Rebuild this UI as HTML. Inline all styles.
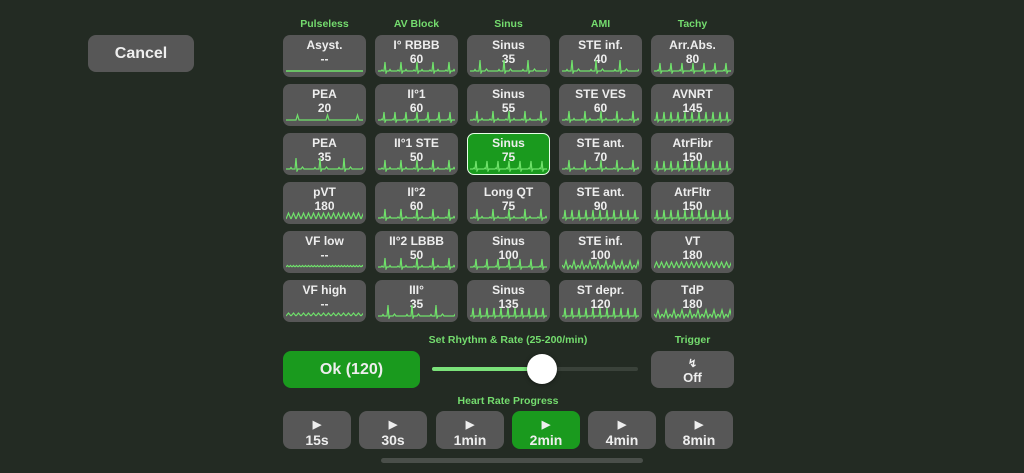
<!DOCTYPE html>
<html><head><meta charset="utf-8"><style>
body{margin:0;width:1024px;height:473px;background:#232b23;font-family:"Liberation Sans",sans-serif;position:relative;overflow:hidden}
.a{position:absolute}
.h{position:absolute;top:18px;width:83px;text-align:center;color:#74dc6e;font-size:10.5px;font-weight:bold}
.c{position:absolute;width:83px;height:42px;background:#575757;border-radius:7px;color:#eee;text-align:center;font-weight:bold;font-size:12px;line-height:14px;box-sizing:border-box;padding-top:3px;overflow:hidden}
.c.g{background:#1a9a1e;border:1.5px solid #e8ffe8;padding-top:2px}
.c svg{position:absolute;left:3px;top:21px}
.c.g svg{left:1.5px;top:19.5px}
.b{position:absolute;background:#575757;border-radius:8px;color:#eee;text-align:center;font-weight:bold}
.p{top:411px;width:68px;height:38px;font-size:14px;line-height:15px;padding-top:5px;box-sizing:border-box}
.p i{font-style:normal;font-size:11px}
</style></head><body>
<svg width="0" height="0" style="position:absolute"><defs>
<pattern id="s40" width="40" height="18" patternUnits="userSpaceOnUse"><path d="M0 15H8L9.5 13L11 15H16L17 4L18.5 17L19.5 15H24L26 12L28 15H40" fill="none" stroke="#6fe26a" stroke-width="1.2"/></pattern>
<pattern id="s24" width="24" height="18" patternUnits="userSpaceOnUse"><path d="M0 15H4L5 13.5L6 15H9L10 4L11 17L12 15H15L16.5 13L18 15H24" fill="none" stroke="#6fe26a" stroke-width="1.2"/></pattern>
<pattern id="s16" width="16" height="18" patternUnits="userSpaceOnUse"><path d="M0 15H3L4 14L5 15H6L7 6L8 17L9 15H11L12 13.5L13 15H16" fill="none" stroke="#6fe26a" stroke-width="1.2"/></pattern>
<pattern id="s11" width="11" height="18" patternUnits="userSpaceOnUse"><path d="M0 15H3L4 14L5 15L6 7L7 17L8 15H11" fill="none" stroke="#6fe26a" stroke-width="1.2"/></pattern>
<pattern id="s7" width="7" height="18" patternUnits="userSpaceOnUse"><path d="M0 15H2L3 7L4 16.5L5 15H7" fill="none" stroke="#6fe26a" stroke-width="1.2"/></pattern>
<pattern id="s30" width="30" height="18" patternUnits="userSpaceOnUse"><path d="M0 15H10L11.5 10L13 15H30" fill="none" stroke="#6fe26a" stroke-width="1.2"/></pattern>
<pattern id="z5" width="5" height="18" patternUnits="userSpaceOnUse"><path d="M0 15L2.5 12L5 15" fill="none" stroke="#6fe26a" stroke-width="1.2"/></pattern>
<pattern id="z3" width="3" height="18" patternUnits="userSpaceOnUse"><path d="M0 15L1.5 13.5L3 15" fill="none" stroke="#6fe26a" stroke-width="1.2"/></pattern>
<pattern id="v5" width="5" height="18" patternUnits="userSpaceOnUse"><path d="M0 16L2.5 10L5 16" fill="none" stroke="#6fe26a" stroke-width="1.2"/></pattern>
<pattern id="t8" width="8" height="18" patternUnits="userSpaceOnUse"><path d="M0 13L2 16L4 9L6 17L8 13" fill="none" stroke="#6fe26a" stroke-width="1.2"/></pattern>
<pattern id="f" width="10" height="18" patternUnits="userSpaceOnUse"><path d="M0 15H10" fill="none" stroke="#6fe26a" stroke-width="1.5"/></pattern>
</defs></svg>

<div class="b" style="left:88px;top:35px;width:106px;height:37px;font-size:16px;line-height:37px">Cancel</div>

<div class="h" style="left:283px">Pulseless</div>
<div class="h" style="left:375px">AV Block</div>
<div class="h" style="left:467px">Sinus</div>
<div class="h" style="left:559px">AMI</div>
<div class="h" style="left:651px">Tachy</div>

<div class="c" style="left:283px;top:35px">Asyst.<br>--<svg width="77" height="18"><rect width="77" height="18" fill="url(#f)"/></svg></div>
<div class="c" style="left:283px;top:84px">PEA<br>20<svg width="77" height="18"><rect width="77" height="18" fill="url(#s30)"/></svg></div>
<div class="c" style="left:283px;top:133px">PEA<br>35<svg width="77" height="18"><rect width="77" height="18" fill="url(#s24)"/></svg></div>
<div class="c" style="left:283px;top:182px">pVT<br>180<svg width="77" height="18"><rect width="77" height="18" fill="url(#v5)"/></svg></div>
<div class="c" style="left:283px;top:231px">VF low<br>--<svg width="77" height="18"><rect width="77" height="18" fill="url(#z3)"/></svg></div>
<div class="c" style="left:283px;top:280px">VF high<br>--<svg width="77" height="18"><rect width="77" height="18" fill="url(#z5)"/></svg></div>

<div class="c" style="left:375px;top:35px">I° RBBB<br>60<svg width="77" height="18"><rect width="77" height="18" fill="url(#s16)"/></svg></div>
<div class="c" style="left:375px;top:84px">II°1<br>60<svg width="77" height="18"><rect width="77" height="18" fill="url(#s11)"/></svg></div>
<div class="c" style="left:375px;top:133px">II°1 STE<br>50<svg width="77" height="18"><rect width="77" height="18" fill="url(#s16)"/></svg></div>
<div class="c" style="left:375px;top:182px">II°2<br>60<svg width="77" height="18"><rect width="77" height="18" fill="url(#s16)"/></svg></div>
<div class="c" style="left:375px;top:231px">II°2 LBBB<br>50<svg width="77" height="18"><rect width="77" height="18" fill="url(#s16)"/></svg></div>
<div class="c" style="left:375px;top:280px">III°<br>35<svg width="77" height="18"><rect width="77" height="18" fill="url(#s24)"/></svg></div>

<div class="c" style="left:467px;top:35px">Sinus<br>35<svg width="77" height="18"><rect width="77" height="18" fill="url(#s24)"/></svg></div>
<div class="c" style="left:467px;top:84px">Sinus<br>55<svg width="77" height="18"><rect width="77" height="18" fill="url(#s16)"/></svg></div>
<div class="c g" style="left:467px;top:133px">Sinus<br>75<svg width="77" height="18"><rect width="77" height="18" fill="url(#s11)"/></svg></div>
<div class="c" style="left:467px;top:182px">Long QT<br>75<svg width="77" height="18"><rect width="77" height="18" fill="url(#s16)"/></svg></div>
<div class="c" style="left:467px;top:231px">Sinus<br>100<svg width="77" height="18"><rect width="77" height="18" fill="url(#s11)"/></svg></div>
<div class="c" style="left:467px;top:280px">Sinus<br>135<svg width="77" height="18"><rect width="77" height="18" fill="url(#s7)"/></svg></div>

<div class="c" style="left:559px;top:35px">STE inf.<br>40<svg width="77" height="18"><rect width="77" height="18" fill="url(#s24)"/></svg></div>
<div class="c" style="left:559px;top:84px">STE VES<br>60<svg width="77" height="18"><rect width="77" height="18" fill="url(#s16)"/></svg></div>
<div class="c" style="left:559px;top:133px">STE ant.<br>70<svg width="77" height="18"><rect width="77" height="18" fill="url(#s16)"/></svg></div>
<div class="c" style="left:559px;top:182px">STE ant.<br>90<svg width="77" height="18"><rect width="77" height="18" fill="url(#s7)"/></svg></div>
<div class="c" style="left:559px;top:231px">STE inf.<br>100<svg width="77" height="18"><rect width="77" height="18" fill="url(#t8)"/></svg></div>
<div class="c" style="left:559px;top:280px">ST depr.<br>120<svg width="77" height="18"><rect width="77" height="18" fill="url(#s7)"/></svg></div>

<div class="c" style="left:651px;top:35px">Arr.Abs.<br>80<svg width="77" height="18"><rect width="77" height="18" fill="url(#s11)"/></svg></div>
<div class="c" style="left:651px;top:84px">AVNRT<br>145<svg width="77" height="18"><rect width="77" height="18" fill="url(#s7)"/></svg></div>
<div class="c" style="left:651px;top:133px">AtrFibr<br>150<svg width="77" height="18"><rect width="77" height="18" fill="url(#s7)"/></svg></div>
<div class="c" style="left:651px;top:182px">AtrFltr<br>150<svg width="77" height="18"><rect width="77" height="18" fill="url(#s7)"/></svg></div>
<div class="c" style="left:651px;top:231px">VT<br>180<svg width="77" height="18"><rect width="77" height="18" fill="url(#v5)"/></svg></div>
<div class="c" style="left:651px;top:280px">TdP<br>180<svg width="77" height="18"><rect width="77" height="18" fill="url(#t8)"/></svg></div>

<div class="h" style="left:283px;width:450px;top:334px">Set Rhythm &amp; Rate (25-200/min)</div>
<div class="h" style="left:651px;top:334px">Trigger</div>
<div class="b" style="left:283px;top:351px;width:137px;height:37px;background:#1a9a1e;font-size:16px;line-height:37px">Ok (120)</div>
<div class="a" style="left:432px;top:367px;width:206px;height:4px;background:#3a423a;border-radius:2px"></div>
<div class="a" style="left:432px;top:367px;width:110px;height:4px;background:#7be27a;border-radius:2px"></div>
<div class="a" style="left:527px;top:354px;width:30px;height:30px;background:#fff;border-radius:50%;box-shadow:0 1px 4px rgba(0,0,0,.4)"></div>
<div class="b" style="left:651px;top:351px;width:83px;height:37px;font-size:13px;line-height:14px;padding-top:5px;box-sizing:border-box"><span style="font-size:11px">↯</span><br>Off</div>

<div class="h" style="left:283px;width:450px;top:395px">Heart Rate Progress</div>
<div class="b p" style="left:283px"><i>▶</i><br>15s</div>
<div class="b p" style="left:359px"><i>▶</i><br>30s</div>
<div class="b p" style="left:436px"><i>▶</i><br>1min</div>
<div class="b p" style="left:512px;background:#1a9a1e"><i>▶</i><br>2min</div>
<div class="b p" style="left:588px"><i>▶</i><br>4min</div>
<div class="b p" style="left:665px"><i>▶</i><br>8min</div>
<div class="a" style="left:381px;top:458px;width:262px;height:5px;background:#4a4f4a;border-radius:3px"></div>
</body></html>
